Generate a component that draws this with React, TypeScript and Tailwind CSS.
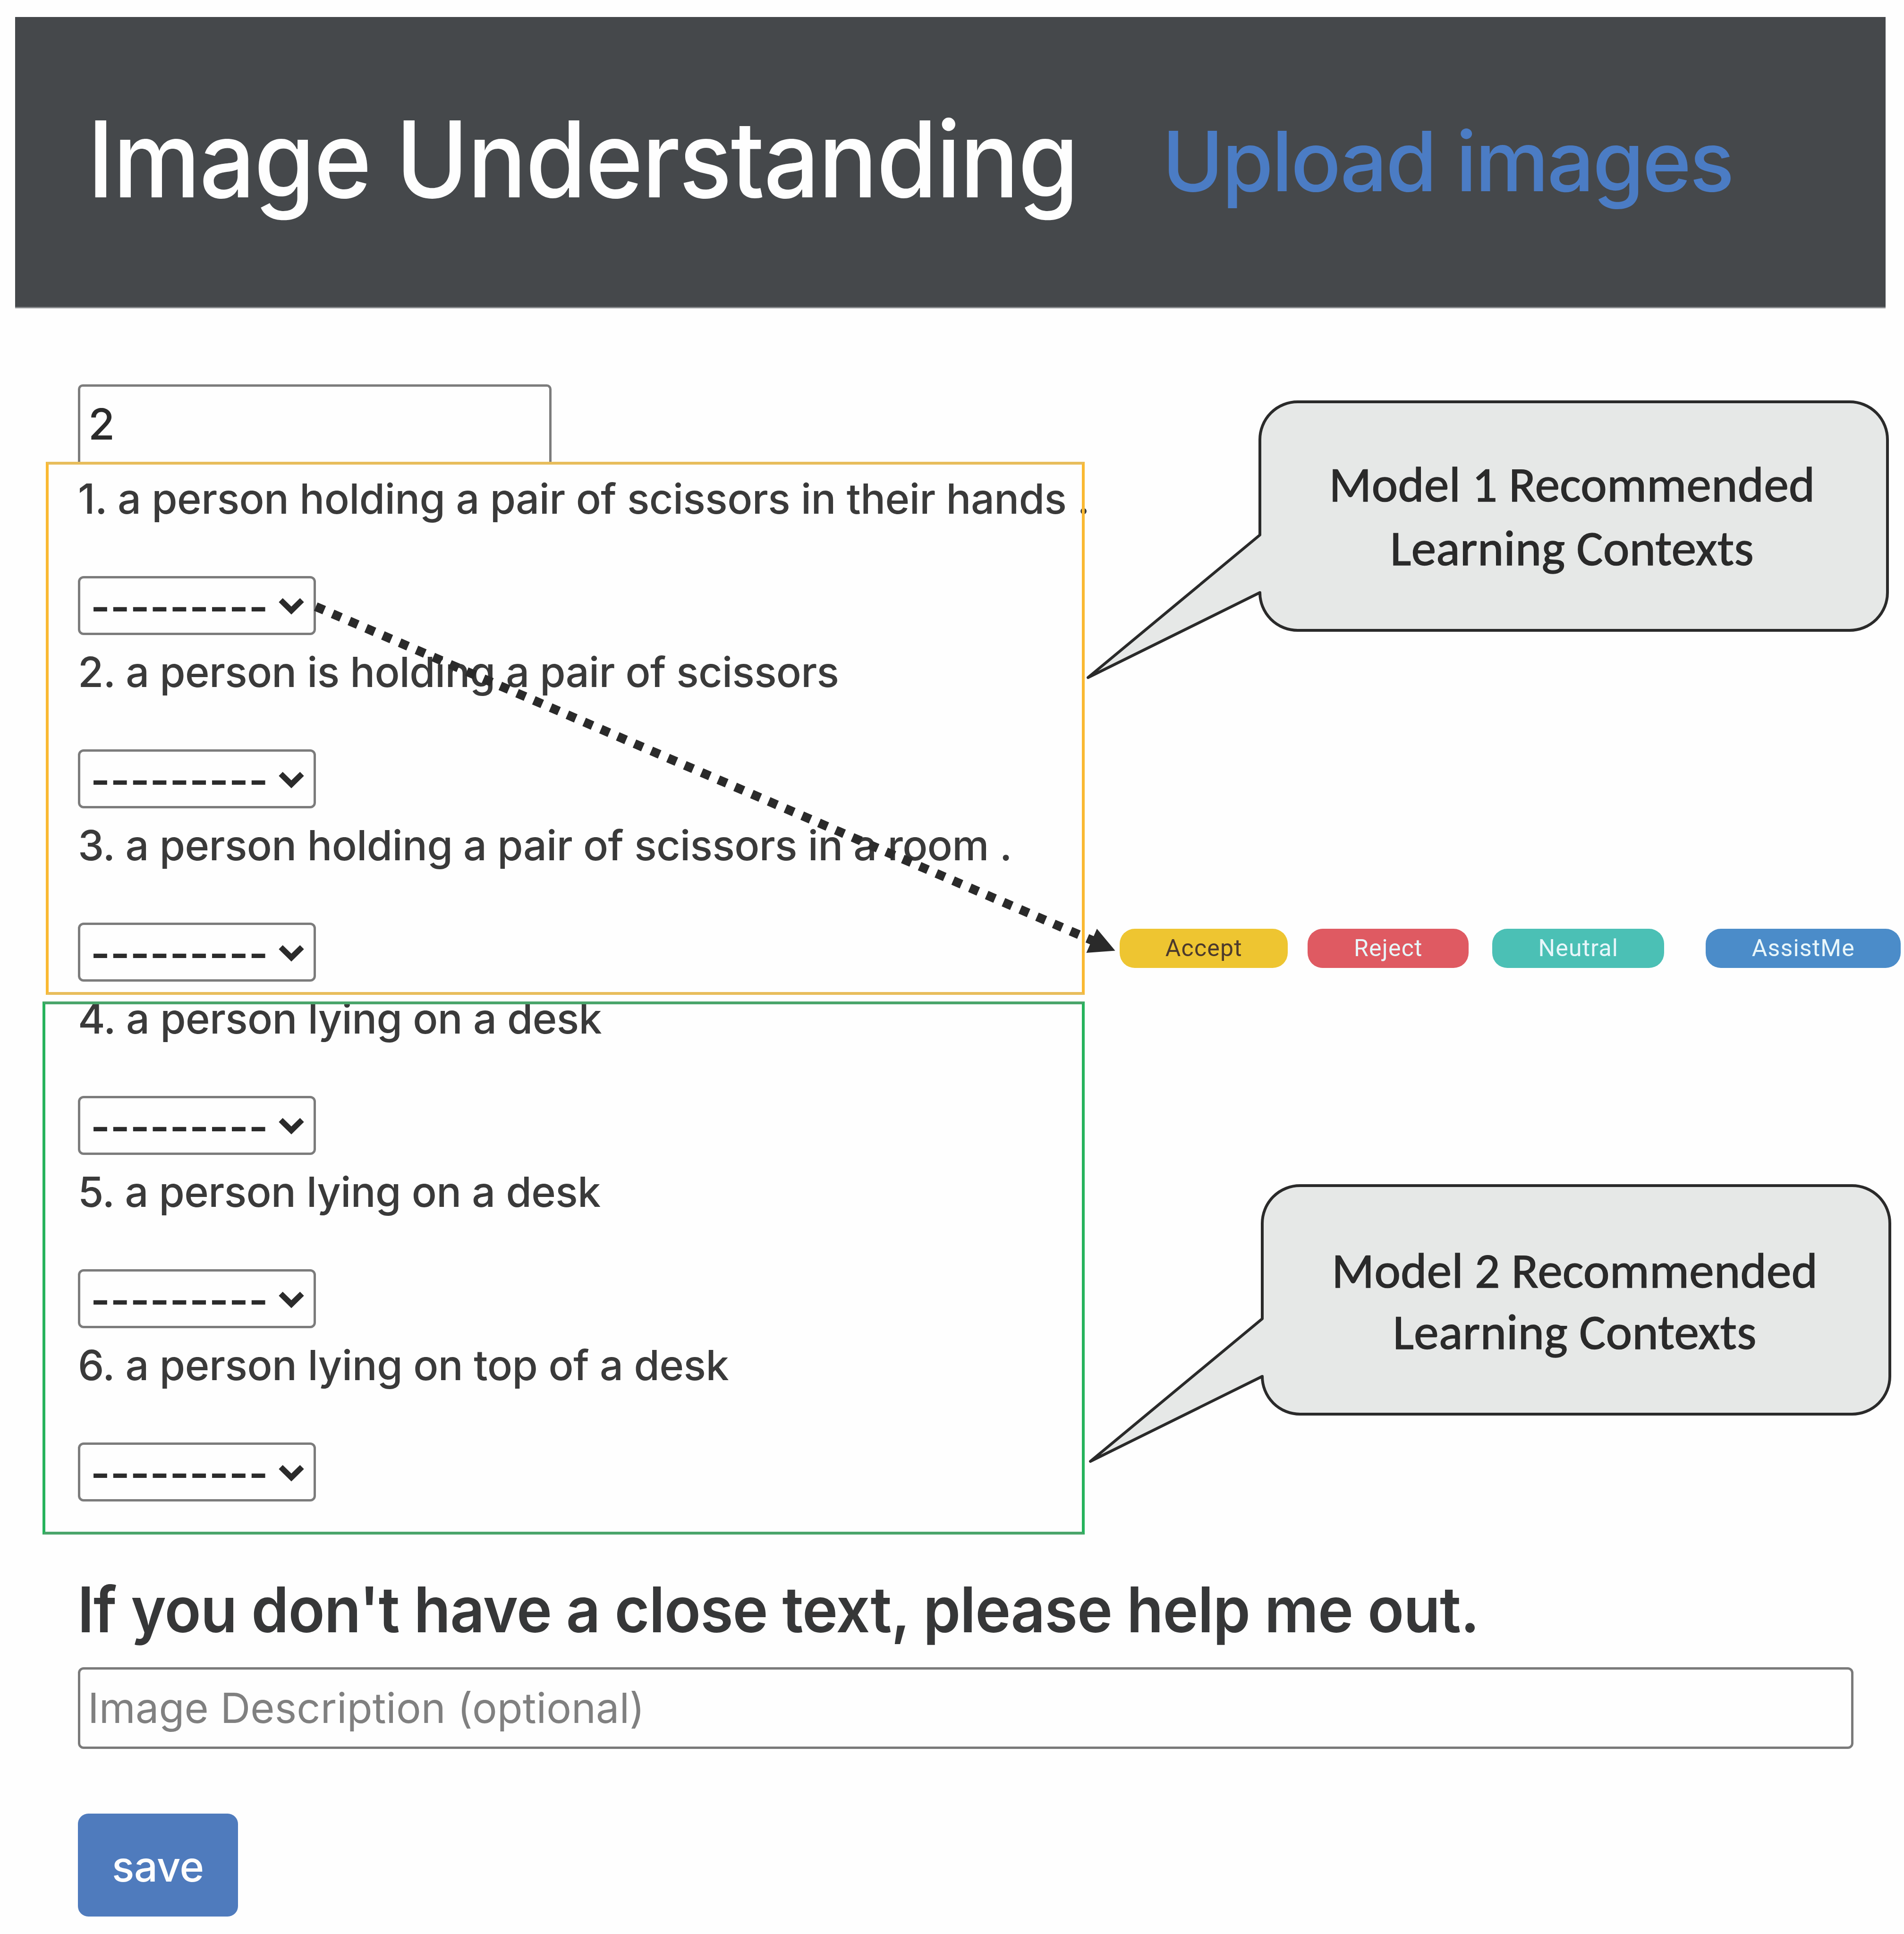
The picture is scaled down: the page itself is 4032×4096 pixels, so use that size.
import React from "react";

const modelOneContexts = [
  { text: "1. a person holding a pair of scissors in their hands .", spacing: "tracking-[-0.58px]" },
  { text: "2. a person is holding a pair of scissors", spacing: "tracking-[-0.72px]" },
  { text: "3. a person holding a pair of scissors in a room .", spacing: "tracking-[-0.63px]" },
];

const modelTwoContexts = [
  { text: "4. a person lying on a desk", spacing: "tracking-[-0.65px]" },
  { text: "5. a person lying on a desk", spacing: "tracking-[-0.65px]" },
  { text: "6. a person lying on top of a desk", spacing: "tracking-[-0.48px]" },
];

function Header() {
  return (
    <header className="mt-[35.5px] ml-[32px] flex h-[617.5px] w-[3961px] items-center border-b-[3px] border-[#8b8d90] bg-[#45484b] pl-[153px] whitespace-nowrap">
      <h1 className="-mt-[12px] w-[2276px] shrink-0 origin-left scale-x-[0.93] text-[224px] leading-[260px] font-medium tracking-[-2.5px] text-[#fefefe]">
        Image Understanding
      </h1>
      <a className="-mt-[4px] text-[176px] leading-[220px] font-[460] tracking-[-3.6px] text-[#4b7cc4]">Upload images</a>
    </header>
  );
}

function SelectBox() {
  return (
    <div className="flex h-[125px] w-[504px] items-center rounded-[12px] border-[5px] border-[#7c7c7c] bg-[#fefefe] pl-[22px]">
      <span className="mt-[5px] w-[398px] shrink-0 text-[88px] leading-[88px] font-semibold tracking-[0.9px] text-[#2b2b2b]">---------</span>
      <svg className="mt-[4px] h-[40px] w-[54px] shrink-0" viewBox="0 0 54 40" fill="none">
        <path d="M4.5 7 L27 29 L49.5 7" stroke="#2b2b2b" strokeWidth="12" />
      </svg>
    </div>
  );
}

function ContextItem({ text, spacing }: { text: string; spacing: string }) {
  return (
    <div className="flex h-[367.2px] flex-col">
      <p className={"mb-[134.4px] text-[88px] leading-[60px] font-[450] whitespace-nowrap text-[#3a3a3a] " + spacing}>{text}</p>
      <SelectBox />
    </div>
  );
}

function CalloutShape() {
  return (
    <svg className="absolute top-0 left-0 h-[490px] w-[1335px] overflow-visible" viewBox="-3 -3 1335 490">
      <path
        d="M80 0 H1249 A80 80 0 0 1 1329 80 V404 A80 80 0 0 1 1249 484 H80 A80 80 0 0 1 0 404 L-364 584 L0 282 V80 A80 80 0 0 1 80 0 Z"
        fill="#e6e8e7"
        stroke="#2a2a2a"
        strokeWidth="6"
        strokeLinejoin="round"
      />
    </svg>
  );
}

function Connector() {
  return (
    <svg className="absolute top-0 left-0 h-[4096px] w-[4032px]" viewBox="0 0 4032 4096" fill="none">
      <path d="M668.8 1284.7 L2320.7 1995" stroke="#2a2a2a" strokeWidth="19" strokeDasharray="19.33 19.33" />
      <path d="M2322.9 1967 L2361.6 2013.6 L2300.5 2018 Z" fill="#2a2a2a" />
    </svg>
  );
}

const pill = "flex h-[83px] items-center justify-center rounded-[32px] text-[50px] leading-[60px]";
const calloutText =
  "flex h-[490px] w-[1335px] flex-col items-center font-['Carlito','Calibri',sans-serif] text-[105px] tracking-[0.4px] whitespace-nowrap text-[#2a2a2a] [-webkit-text-stroke:1.5px_#2a2a2a]";

export default function App() {
  return (
    <div className="relative flex h-[4096px] w-[4032px] flex-col overflow-hidden bg-[#fefefe] font-['Inter',sans-serif]">
      <Header />

      <main className="flex items-start">
        <section className="flex w-[2297px] shrink-0 flex-col items-start">
          <div className="mt-[160.6px] ml-[165px] flex h-[164px] w-[1003px] items-center rounded-t-[10px] border-x-[5px] border-t-[5px] border-[#7c7c7c] pl-[17px] text-[91px] leading-[110px] font-medium text-[#2b2b2b]">
            2
          </div>

          <div className="relative ml-[97.3px] h-[1129px] w-[2199.4px] pt-[48px] pl-[67.7px] after:absolute after:inset-0 after:border-[6px] after:border-x-[#fab932] after:border-y-[#e8bd5c] after:content-['']">
            {modelOneContexts.map((item) => (
              <ContextItem key={item.text} {...item} />
            ))}
          </div>

          <div className="relative mt-[14px] ml-[90.4px] h-[1129.3px] w-[2206.3px] pt-[6px] pl-[74.6px] after:absolute after:inset-0 after:border-[6px] after:border-x-[#26b35c] after:border-y-[#4aa56b] after:content-['']">
            {modelTwoContexts.map((item) => (
              <ContextItem key={item.text} {...item} />
            ))}
          </div>

          <h2 className="mt-[79px] ml-[164px] origin-left scale-x-[0.955] text-[133px] leading-[160px] font-semibold tracking-[-1.15px] whitespace-nowrap text-[#363738]">
            If you don't have a close text, please help me out.
          </h2>

          <div className="mt-[41.8px] ml-[165px] flex h-[173.4px] w-[3760px] items-center rounded-[12px] border-[5px] border-[#7a7a7a] pl-[16px] text-[88px] leading-[110px] font-[430] tracking-[0.1px] text-[#808080]">
            Image Description (optional)
          </div>

          <button className="mt-[137px] ml-[165px] h-[218px] w-[338.6px] rounded-[22px] bg-[#4f7bbd] pt-[5px] text-[88px] leading-[110px] font-[460] tracking-[-0.5px] text-[#fdfdfd]">
            save
          </button>
        </section>

        <aside className="flex flex-col items-start">
          <div className={"relative mt-[194.6px] ml-[367.6px] pt-[111px] leading-[135px] " + calloutText}>
            <CalloutShape />
            <span className="relative -left-[3px]">Model 1 Recommended</span>
            <span className="relative -left-[3px]">Learning Contexts</span>
          </div>

          <div className="mt-[629.4px] ml-[74.3px] flex font-['Roboto',sans-serif] tracking-[1.2px] text-[#e8f6fa]">
            <div className={pill + " w-[356px] bg-[#eec531] text-[#4c3a2c]"}>Accept</div>
            <div className={pill + " ml-[42px] w-[341px] bg-[#df5a62]"}>Reject</div>
            <div className={pill + " ml-[50px] w-[364px] bg-[#4bc0b5]"}>Neutral</div>
            <div className={pill + " ml-[88px] w-[413px] bg-[#4b8cc9]"}>AssistMe</div>
          </div>

          <div className={"relative mt-[458px] ml-[373.3px] pt-[118px] leading-[130px] " + calloutText}>
            <CalloutShape />
            <span className="relative -left-[3px]">Model 2 Recommended</span>
            <span className="relative -left-[3px]">Learning Contexts</span>
          </div>
        </aside>
      </main>

      <Connector />
    </div>
  );
}
